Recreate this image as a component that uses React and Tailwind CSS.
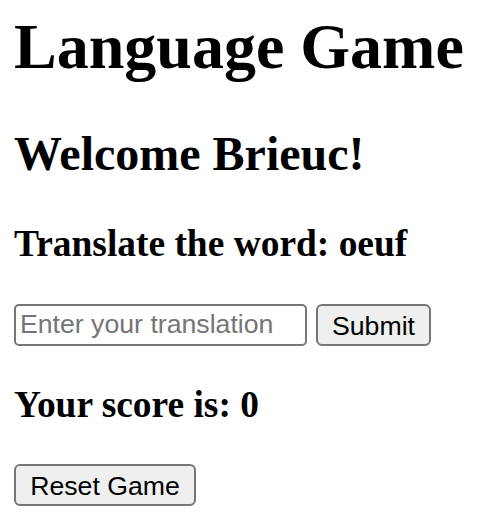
export default function App() {
  return (
    <div className="min-h-[532px] bg-white pl-[14px] pt-[10px] text-black font-['Liberation_Serif','Times_New_Roman',serif]">
      <h1 className="m-0 text-[64px] leading-[73.6px] font-bold">Language Game</h1>
      <h2 className="mt-[42.88px] text-[48px] leading-[55.2px] font-bold">Welcome Brieuc!</h2>
      <h3 className="mt-[39.84px] text-[37.44px] leading-[43.06px] font-bold">Translate the word: oeuf</h3>
      <form className="mt-[39px] flex items-start gap-[9px]" onSubmit={(e) => e.preventDefault()}>
        <input
          type="text"
          placeholder="Enter your translation"
          className="h-[42px] w-[293px] rounded-[5px] border-2 border-[#767676] bg-white px-[4px] py-[2px] text-[26.67px] text-black font-['Liberation_Sans',Arial,sans-serif] placeholder:text-[#757575] outline-none"
        />
        <button
          type="submit"
          className="h-[42px] w-[115px] rounded-[6px] border-2 border-[#767676] bg-[#efefef] px-[12px] text-[26.67px] text-black font-['Liberation_Sans',Arial,sans-serif]"
        >
          Submit
        </button>
      </form>
      <h3 className="mt-[37px] text-[37.44px] leading-[43.06px] font-bold">Your score is: 0</h3>
      <button
        type="button"
        className="mt-[38px] h-[42px] w-[182px] rounded-[6px] border-2 border-[#767676] bg-[#efefef] px-[12px] text-[26.67px] text-black font-['Liberation_Sans',Arial,sans-serif]"
      >
        Reset Game
      </button>
    </div>
  );
}
